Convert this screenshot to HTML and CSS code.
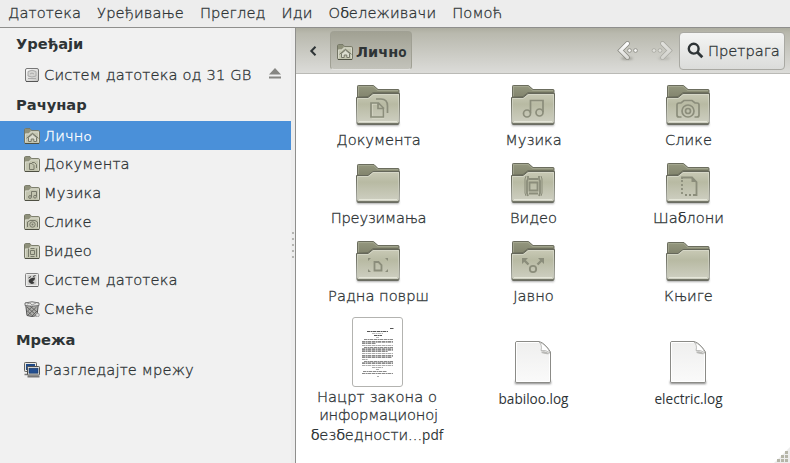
FILE: index.html
```
<!DOCTYPE html>
<html lang="sr">
<head>
<meta charset="utf-8">
<title>Лично</title>
<link rel="stylesheet" href="styles.css">
</head>
<body>
<svg class="defs" width="0" height="0">
  <defs>
    <linearGradient id="front" x1="0" y1="0" x2="0" y2="1"><stop offset="0" stop-color="#c9cab6"/><stop offset=".35" stop-color="#b8baa3"/><stop offset=".88" stop-color="#cbccbd"/><stop offset="1" stop-color="#d3d4c6"/></linearGradient>
    <linearGradient id="back" x1="0" y1="0" x2="0" y2="1"><stop offset="0" stop-color="#95987f"/><stop offset="1" stop-color="#7d7f69"/></linearGradient>
    <linearGradient id="paper" x1="0" y1="0" x2="0" y2="1"><stop offset="0" stop-color="#efefee"/><stop offset="1" stop-color="#fafafa"/></linearGradient>
    <linearGradient id="metal" x1="0" y1="0" x2="1" y2="1"><stop offset="0" stop-color="#fff"/><stop offset="1" stop-color="#c4c4c2"/></linearGradient>
    <linearGradient id="arrow" x1="0" y1="0" x2="0" y2="1"><stop offset="0" stop-color="#fff"/><stop offset="1" stop-color="#dcdcd8"/></linearGradient>
    <filter id="soft" x="-10%" y="-200%" width="120%" height="500%"><feGaussianBlur stdDeviation=".8"/></filter>
    <symbol id="folder-front" viewBox="0 0 48 46">
      <path d="M2.5 15.5H14L19 11.5H45.5L45 41.2Q45 42 44.2 42H3.8Q3 42 3 41.2Z" fill="url(#front)" stroke="#65675a"/>
      <path d="M3.5 40V16.5H14.4L19.4 12.5H44.5V40" fill="none" stroke="#e0e1d3" stroke-opacity=".6"/>
      <path d="M5 39.5H43" stroke="#ecede2" stroke-opacity=".75"/>
      <path d="M3.5 42H44.5" stroke="#4e5043"/>
    </symbol>
    <symbol id="folder" viewBox="0 0 48 46">
      <rect x="3" y="41" width="42" height="2.5" fill="#444" opacity=".6" filter="url(#soft)"/>
      <path d="M3.5 18V4.3Q3.5 3.5 4.3 3.5H19.5L24 7.5H44.2Q45 7.5 45 8.3V14H20" fill="url(#back)" stroke="#6b6d5e"/>
      <path d="M4.5 14V4.5H19L23.5 8.5H44" fill="none" stroke="#aeb19b" stroke-opacity=".6"/>
      <path d="M5 15L14 14.5 19 10.5H44" fill="none" stroke="#5f6151" stroke-opacity=".6"/>
      <use href="#folder-front"/>
    </symbol>
    <symbol id="folder-plain" viewBox="0 0 48 46">
      <rect x="3" y="41" width="42" height="2.5" fill="#444" opacity=".6" filter="url(#soft)"/>
      <path d="M3.5 18V5.3Q3.5 4.5 4.3 4.5H20L24 8.5H44.2Q45 8.5 45 9.3V14H20" fill="url(#back)" stroke="#6b6d5e"/>
      <path d="M4.5 14V5.5H19.5L23.5 9.5H44" fill="none" stroke="#aeb19b" stroke-opacity=".5"/>
      <use href="#folder-front"/>
    </symbol>
    <symbol id="mini" viewBox="0 0 16 16">
      <path d="M.5 14.5V1.8Q.5 .6 1.6 .6H6L7.5 2.6H14.4Q15.5 2.6 15.5 3.7V14.5Q15.5 15.5 14.5 15.5H1.5Q.5 15.5 .5 14.5Z" fill="#c3c5b0" stroke="#737564"/>
      <path d="M1 1H6L7 3 5 5.5H1Z" fill="#8e907a"/>
      <path d="M1.5 14V6H5L6.5 4H14.5V14" fill="none" stroke="#d8d9cb"/>
      <path d="M1 15.5H15" stroke="#4e5043"/>
    </symbol>
    <symbol id="home" viewBox="0 0 16 16"><use href="#mini"/><path d="M4.5 9.500V13.500H7.200V11H9.800V13.500H12.500V9.500L8.500 6Z" fill="#dcddd0" stroke="#77796a"/><path d="M2.500 10.300L8.500 5.300 14.500 10.300" fill="none" stroke="#77796a"/></symbol>
    <symbol id="log" viewBox="0 0 42 48">
      <rect x="3" y="42" width="36" height="3" fill="#333" opacity=".6" filter="url(#soft)"/>
      <path d="M3.500 4Q3.500 2.500 5 2.500H27Q33 4 38.500 13V42Q38.500 43.500 37 43.500H5Q3.500 43.500 3.500 42Z" fill="url(#paper)" stroke="#8b8b87"/>
      <path d="M4.500 42.500V3.500H27M37.500 15V42.500H4.500" fill="none" stroke="#fff"/>
      <path d="M27 3Q30.500 6 29 11.500Q34 10.500 38 14Q35 6 27 3Z" fill="#fff" stroke="#a5a5a2" stroke-width=".7"/>
      <path d="M30 9V12.500Q34 11.500 37.500 15Q33 15.500 29.500 14Z" fill="#b9b9b6"/>
    </symbol>
  </defs>
</svg>

<nav class="menubar">
  <span>Датотека</span><span>Уређивање</span><span>Преглед</span><span>Иди</span><span>О<i class="rg">б</i>ележивачи</span><span>Помоћ</span>
</nav>
<div class="body">
  <aside class="sidebar">
    <h2>Уређаји</h2>
    <div class="row"><svg class="ic" viewBox="0 0 16 16"><rect x="1.500" y="1.500" width="13" height="13" rx="1.500" fill="url(#metal)" stroke="#777"/><path d="M4 4.500Q8 2 12 4.500V9Q8 11 4 9Z" fill="#d5d5d3" stroke="#aaa"/><path d="M4 11.500H12M6 7Q8 5 10 7" stroke="#aaa" fill="none"/><path d="M2 14.500H14" stroke="#555"/></svg><span>Систем датотека од 31 GB</span><svg class="eject" viewBox="0 0 12 11"><path d="M6 0L12 6.500H0ZM0 8.500H12V10.500H0Z" fill="#868683"/></svg></div>
    <h2>Рачунар</h2>
    <div class="row selected"><svg class="ic"><use href="#home"/></svg><span>Личн<i class="lo">o</i></span></div>
    <div class="row"><svg class="ic" viewBox="0 0 16 16"><use href="#mini"/><path d="M5.500 7.500H8L10 9.500V13.500H5.500ZM8 6.500H10.500L12.500 8.500V12" fill="none" stroke="#77796a"/></svg><span>Документа</span></div>
    <div class="row"><svg class="ic" viewBox="0 0 16 16"><use href="#mini"/><path d="M7.500 12V6.500H12.500V11.500" fill="none" stroke="#77796a"/><circle cx="6" cy="12" r="1.400" fill="none" stroke="#77796a"/><circle cx="11" cy="11.700" r="1.400" fill="none" stroke="#77796a"/></svg><span>Музика</span></div>
    <div class="row"><svg class="ic" viewBox="0 0 16 16"><use href="#mini"/><path d="M3.500 13V8L6 6.500H11L13.500 8V13" fill="none" stroke="#77796a"/><circle cx="8.500" cy="10.500" r="2.700" fill="none" stroke="#77796a"/><circle cx="8.500" cy="10.500" r="1" fill="#77796a"/></svg><span>Слике</span></div>
    <div class="row"><svg class="ic" viewBox="0 0 16 16"><use href="#mini"/><path d="M4.500 5.500V14M12.500 5.500V14M6.500 7.500H10.500V11.500H6.500ZM6.500 5.500H10.500M6.500 13.500H10.500" fill="none" stroke="#77796a"/></svg><span>Видео</span></div>
    <div class="row"><svg class="ic" viewBox="0 0 16 16"><rect x="1.500" y="1.500" width="13" height="13" rx="1" fill="#ececeb" stroke="#858585"/><rect x="3.500" y="3" width="9" height="10" fill="#d0d0ce"/><path d="M4.500 9Q5.500 5.500 11 5.500Q11 9 8.500 9L10.500 11Q6 13.500 4.500 9Z" fill="#3a3a3a"/><path d="M4.500 6L7 4.500M9 4.500L11.500 3.500" stroke="#444"/><path d="M2 14.500H14" stroke="#666"/></svg><span>Систем датотека</span></div>
    <div class="row last"><svg class="ic" viewBox="0 0 16 16"><path d="M1.500 2L3 14.500Q8 16.500 13 14.500L14.500 2Z" fill="#b0b0ad" stroke="#555"/><path d="M3 6L12 14M6 5L13 11M3.500 10L8 14.500M12.500 6L4 14M9 5L3.500 10M13 10L8 15" stroke="#5c5c5a" stroke-width=".9"/><path d="M1 2Q8 -.5 15 2V4.500Q8 6 1 4.500Z" fill="#e6e6e4" stroke="#666" stroke-width=".9"/><path d="M3 3L6 2 8 4 12 2" stroke="#999" fill="none"/><circle cx="13.500" cy="14" r="1.800" fill="#ddd" stroke="#888" stroke-width=".7"/></svg><span>Смеће</span></div>
    <h2>Мрежа</h2>
    <div class="row"><svg class="ic" viewBox="0 0 16 16"><rect x=".5" y=".5" width="12" height="9" rx=".8" fill="#e8e8e4" stroke="#60605d"/><rect x="2" y="2" width="9" height="6" fill="#204a87"/><path d="M.5 12.500H5" stroke="#777" stroke-width="1.500"/><rect x="3.500" y="4.500" width="12" height="8.500" rx=".8" fill="#e8e8e4" stroke="#50504d"/><rect x="5" y="6.200" width="9" height="5" fill="#234f90" stroke="#17345f" stroke-width=".6"/><path d="M3.500 14.500H15.500" stroke="#777" stroke-width="2"/></svg><span>Разгледајте мрежу</span></div>
  </aside>
  <div class="handle"><i></i><i></i><i></i><i></i><i></i></div>
  <main>
    <div class="toolbar">
      <svg class="chev" viewBox="0 0 8 10"><path d="M6.500 .8L2.300 5 6.500 9.200" fill="none" stroke="#2e3436" stroke-width="2"/></svg>
      <div class="crumb"><svg class="ic"><use href="#home"/></svg><b>Личн<i class="lo">o</i></b></div>
      <svg class="nav" width="60" height="22" viewBox="0 0 60 22">
        <ellipse cx="10" cy="18.500" rx="6" ry="1.300" fill="#77776f" opacity=".6" filter="url(#soft)"/>
        <path d="M10.500 3.500L3.500 10.500 10.500 17.500" fill="none" stroke="#85857e" stroke-width="4.600" stroke-linecap="round"/>
        <path d="M10.500 3.500L3.500 10.500 10.500 17.500" fill="none" stroke="url(#arrow)" stroke-width="3.200" stroke-linecap="round"/>
        <g fill="#f6f6f4" stroke="#85857e" stroke-width=".8"><circle cx="12.500" cy="10.500" r="1.900"/><circle cx="18.500" cy="10.500" r="1.900"/></g>
        <g opacity=".5"><ellipse cx="47" cy="18.500" rx="6" ry="1.300" fill="#77776f" opacity=".6" filter="url(#soft)"/><path d="M45.500 3.500L52.500 10.500 45.500 17.500" fill="none" stroke="#85857e" stroke-width="4.600" stroke-linecap="round"/>
        <path d="M45.500 3.500L52.500 10.500 45.500 17.500" fill="none" stroke="url(#arrow)" stroke-width="3.200" stroke-linecap="round"/>
        <g fill="#f6f6f4" stroke="#85857e" stroke-width=".8"><circle cx="37" cy="10.500" r="1.900"/><circle cx="43" cy="10.500" r="1.900"/></g></g>
      </svg>
      <button class="search"><svg width="17" height="17" viewBox="0 0 17 17"><circle cx="6.700" cy="6.700" r="4.900" fill="none" stroke="#2e3436" stroke-width="2.400"/><path d="M10.300 10.300L15.300 15.300" stroke="#2e3436" stroke-width="2.800"/></svg><span>Претрага</span></button>
    </div>
    <div class="grid">
      <figure><svg class="f" viewBox="0 0 48 46"><use href="#folder"/><path d="M18 22H25.300L30.300 27V36H18Z" fill="none" stroke="#dddece"/><g fill="none" stroke="#8b8d7b" stroke-width="1.700"><path d="M17 21H24.500L29.500 26V35H17ZM24 21.500V26.500H29M22 17H27Q33.500 17 33.500 24V31"/></g></svg><figcaption>Документа</figcaption></figure>
      <figure><svg class="f" viewBox="0 0 48 46"><use href="#folder"/><g fill="none" stroke="#8b8d7b" stroke-width="1.700"><path d="M21.500 31V18.500H34V30"/><circle cx="18" cy="31.500" r="3.500"/><circle cx="30.500" cy="30.500" r="3.500"/></g></svg><figcaption>Музика</figcaption></figure>
      <figure><svg class="f" viewBox="0 0 48 46"><use href="#folder"/><g fill="none" stroke="#8b8d7b" stroke-width="1.700"><path d="M17.500 35H15Q13 35 13 33V23Q13 21 15 21H17L20 18.500H28L31 21H33Q35 21 35 23V33Q35 35 33 35H30.500"/><circle cx="24" cy="29" r="6"/><circle cx="24" cy="29" r="2.500"/></g></svg><figcaption>Слике</figcaption></figure>
      <figure><svg class="f" viewBox="0 0 48 46"><use href="#folder-plain"/></svg><figcaption class="tight">Преузимања</figcaption></figure>
      <figure><svg class="f" viewBox="0 0 48 46"><use href="#folder"/><g fill="none" stroke="#8b8d7b" stroke-width="1.800"><path d="M19 16V19L18 21V33L19 36M30 16V19L31 21V33L30 36M20.500 22.500H28.500V30.500H20.500ZM20 19H29M20 33.500H29"/><path d="M17 16L16 19V33L17 36M32 16L33 19V33L32 36" stroke-width="1"/></g></svg><figcaption>Видео</figcaption></figure>
      <figure><svg class="f" viewBox="0 0 48 46"><use href="#folder"/><g fill="none" stroke="#8b8d7b" stroke-width="1.800"><path d="M18 19V17.500H28L32.500 22V35H31"/><path d="M27.500 17V22H33Z" fill="#8b8d7b" stroke="none"/><path d="M18 20V36M21 35H31" stroke-dasharray="2 2"/></g></svg><figcaption>Ша<i class="rg">б</i>лони</figcaption></figure>
      <figure><svg class="f" viewBox="0 0 48 46"><use href="#folder"/><g fill="#8b8d7b"><path d="M14 20H17L14 23ZM31 20H34V23ZM14 31V34H17ZM34 31V34H31Z"/><path d="M20.500 24H24.500L27.500 27V32.500H20.500Z" fill="none" stroke="#8b8d7b" stroke-width="1.800"/></g></svg><figcaption>Радна површ</figcaption></figure>
      <figure><svg class="f" viewBox="0 0 48 46"><use href="#folder"/><g fill="#8b8d7b"><path d="M13 20H19L13 26ZM29 20H35V26Z"/><path d="M15 22L19.500 26.500M33 22L28.500 26.500" stroke="#8b8d7b" stroke-width="2.400"/><circle cx="24" cy="31" r="3.200" fill="none" stroke="#8b8d7b" stroke-width="1.800"/></g></svg><figcaption>Јавно</figcaption></figure>
      <figure><svg class="f" viewBox="0 0 48 46"><use href="#folder-plain"/></svg><figcaption>Књиге</figcaption></figure>
      <figure class="file"><svg class="thumb" width="51" height="70" viewBox="0 0 51 70"><rect x=".5" y=".5" width="50" height="69" rx="2.500" fill="#fff" stroke="#b3b3b0"/><g stroke="#8a8a8a" stroke-width="1" stroke-dasharray="3 .5 1.500 .4 4 .6" fill="none"><path d="M38 11.500H42M15 14.500H36M22 18.500H30" stroke="#555"/><path d="M20 16.500H31M24 20.500H27" stroke="#bbb"/><path d="M12 22.500H41M10 24.500H41M10 26.500H24M12 30.500H41M10 32.500H41M10 34.500H36M10 38.500H41M10 40.500H40M12 44.500H41M10 46.500H41M11 54.500H35M10 56.500H41"/><path d="M10 25.500H41M10 28.500H41M10 31.500H41M10 33.500H41M10 36.500H41M10 39.500H41M10 42.500H16M10 45.500H41M10 48.500H41M20 50.500H31M24 52.500H27M25 59.500H27" stroke="#aaa"/></g></svg><figcaption><span class="wide">Нацрт закона о</span><br><span class="tight">информационој</span><br><span class="third"><i class="rg">б</i>ез<i class="rg">б</i>едности...<span class="latin">pdf</span></span></figcaption></figure>
      <figure class="file log"><svg class="doc"><use href="#log"/></svg><figcaption class="latin">babiloo.log</figcaption></figure>
      <figure class="file log"><svg class="doc"><use href="#log"/></svg><figcaption class="latin">electric.log</figcaption></figure>
    </div>
    <svg class="grip" width="16" height="16" viewBox="0 0 16 16"><path d="M16 0V16H0Z" fill="#ededed"/><g fill="#b5b5a8"><rect x="11" y="4" width="3" height="3"/><rect x="7" y="8" width="3" height="3"/><rect x="11" y="8" width="3" height="3"/><rect x="3" y="12" width="3" height="3"/><rect x="7" y="12" width="3" height="3"/><rect x="11" y="12" width="3" height="3"/></g></svg>
  </main>
</div>
</body>
</html>
```
FILE: styles.css
```
* { box-sizing: border-box; }
body { margin: 0; width: 790px; height: 463px; overflow: hidden; display: flex; flex-direction: column; background: #ededed; color: #2e3436; font: 200 14.67px/18px "DejaVu Sans", "DejaVu Sans Light", sans-serif; -webkit-text-stroke: .3px currentColor; }
.defs { position: absolute; }
i { font-style: normal; }
.rg { font-weight: 400; -webkit-text-stroke: 0; letter-spacing: -.4px; }
.lo { font: 400 13.5px/14px "Open Sans", sans-serif; -webkit-text-stroke: 0; }
b .lo { font-weight: 700; }
.menubar { height: 28px; flex: none; border-bottom: 1px solid #8f8f8d; display: flex; align-items: center; padding: 0 0 1px 8px; gap: 16px; white-space: nowrap; letter-spacing: .12px; }
.body { flex: 1; display: flex; min-height: 0; }
.sidebar { width: 291px; background: #f1f1f1; flex: none; letter-spacing: .15px; }
h2 { margin: 0; height: 32px; padding-left: 16px; font-size: 14.67px; font-weight: 700; line-height: 32px; letter-spacing: 0; -webkit-text-stroke: 0; }
.row { height: 29px; display: flex; align-items: center; padding: 0 10px 0 24px; gap: 4px; white-space: nowrap; }
.row.selected { background: #4a90d9; color: #fff; margin-bottom: -1px; }
.row.last { margin-bottom: 1px; }
h2:last-of-type + .row { margin-top: -1px; }
.ic { width: 16px; height: 16px; flex: none; }
.eject { width: 12px; height: 11px; margin-left: auto; margin-top: -3px; }
.handle { width: 5px; border-right: 1px solid #8f8f8d; background: #ededed; display: flex; flex-direction: column; align-items: center; gap: 4px; padding-top: 204px; }
.handle i { width: 2px; height: 2px; background: #b5b5b2; }
main { flex: 1; background: #fff; position: relative; }
.toolbar { height: 46px; border-bottom: 1px solid #babab6; background: linear-gradient(#adada0, #b9b9ae 12%, #dcdcd9); display: flex; align-items: center; padding-left: 13px; }
.chev { width: 8px; height: 10px; }
.crumb { width: 82px; height: 39px; margin-left: 13px; border: 1px solid #a0a094; border-bottom-color: #e4e4e1; border-radius: 4px; background: linear-gradient(#a1a193, #c3c3bb); display: flex; align-items: center; padding: 3px 0 0 6px; gap: 3px; }
b { font-weight: 700; font-size: 14.5px; -webkit-text-stroke: 0; }
.nav { margin-left: 205px; }
.search { margin-left: 2px; width: 106px; height: 38px; border: 1px solid #a9a9a3; border-radius: 4px; background: linear-gradient(#f4f5f4, #dbdcda); font: inherit; color: inherit; display: flex; align-items: center; padding: 0 0 0 7px; gap: 4px; }
.grid { display: grid; grid-template-columns: repeat(3, 155px); grid-template-rows: 78px 78px 78px auto; padding: 8px 0 0 5px; }
figure { margin: 0; display: flex; flex-direction: column; align-items: center; text-align: center; }
.f { width: 48px; height: 46px; margin-right: 2px; }
figcaption { white-space: nowrap; margin-top: 3px; line-height: 18px; }
.tight { letter-spacing: -.2px; }
.wide { letter-spacing: .1px; margin-left: -3px; }
.third { display: inline-block; margin-top: 2px; margin-left: -3px; }
.file { padding-top: 1px; }
.thumb { display: block; margin-right: 2px; }
.file figcaption { margin-top: 1px; }
.file.log { padding-top: 23px; }
.doc { width: 42px; height: 48px; margin-right: 2px; }
.file.log figcaption { margin-top: 3px; }
.latin { font: 400 13.6px/18px "Open Sans", sans-serif; -webkit-text-stroke: 0; }
.grip { position: absolute; right: 0; bottom: 0; }
```
